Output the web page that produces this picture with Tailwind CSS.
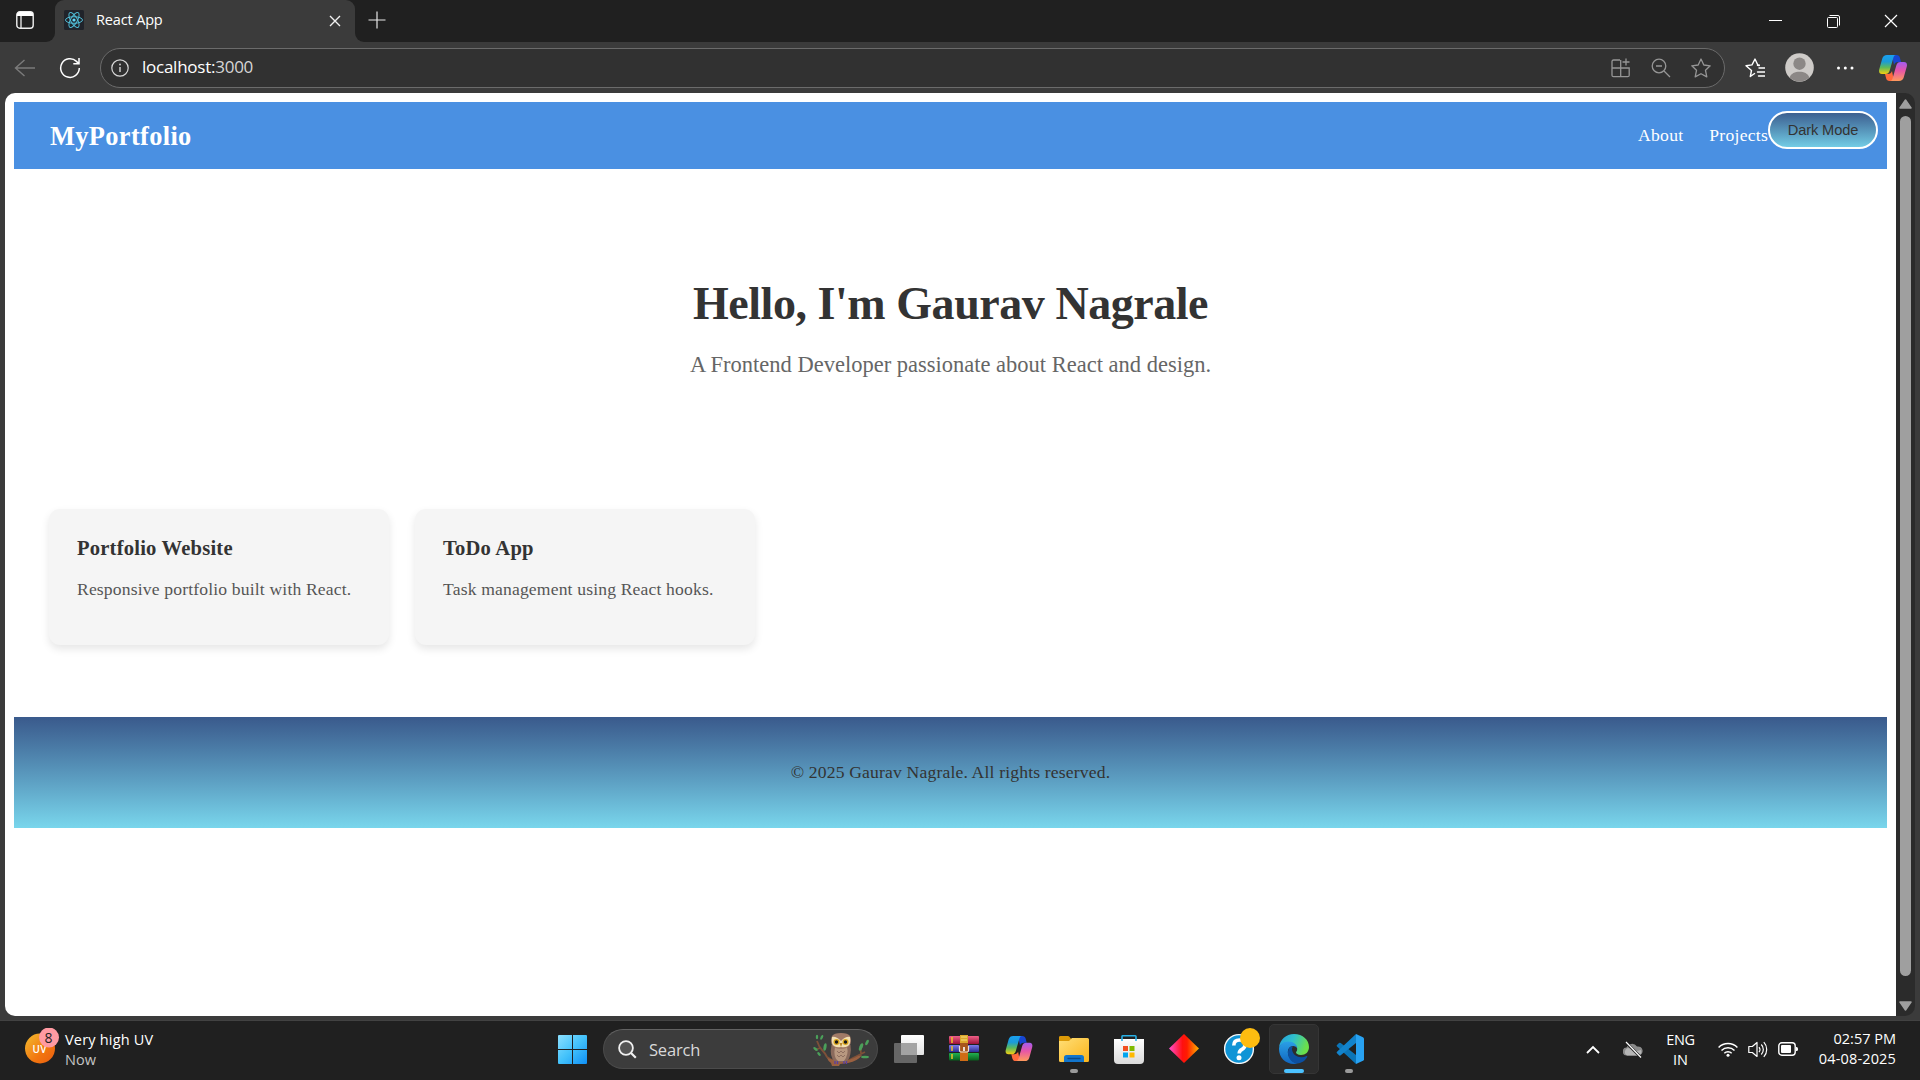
<!DOCTYPE html>
<html lang="en">
<head>
<meta charset="utf-8">
<title>React App</title>
<script src="https://cdn.jsdelivr.net/npm/@tailwindcss/browser@4"></script>
</head>
<body class="w-[1920px] h-[1080px] overflow-hidden bg-[#3b3b3b] flex flex-col font-['Open_Sans',sans-serif] text-white">
<svg class="absolute w-0 h-0" aria-hidden="true">
  <defs>
    <linearGradient id="cpA" x1="0" y1="0" x2="0" y2="1"><stop offset="0" stop-color="#1aa0f0"/><stop offset=".35" stop-color="#1b9bd8"/><stop offset=".65" stop-color="#5cba5c"/><stop offset="1" stop-color="#f5cf10"/></linearGradient>
    <linearGradient id="cpB" x1="0" y1="0" x2="0" y2="1"><stop offset="0" stop-color="#a35cf0"/><stop offset=".45" stop-color="#e655a8"/><stop offset="1" stop-color="#ff9a5c"/></linearGradient>
    <symbol id="copilot" viewBox="0 0 28 26">
      <path d="M13 0h4.500c1.900 0 2.900 1 3.400 2.700L22 7h-3c-2.200 0-3.300 1-4 3z" fill="#1746d2"/>
      <path d="M15 26h-4.500c-1.900 0-2.900-1-3.400-2.700L6 19h3c2.200 0 3.300-1 4-3z" fill="#ff6a3c"/>
      <path d="M8 0h9c-1.500 0-2.200 1.300-2.700 3l-3.600 12.500C10 18 8.600 19 6.500 19H3C.6 19-.4 17.200.2 14.500L3.300 3.500C4 1.200 5.500 0 8 0z" fill="url(#cpA)"/>
      <path d="M20 26h-9c1.500 0 2.200-1.300 2.700-3l3.600-12.500C18 8 19.400 7 21.500 7H25c2.400 0 3.400 1.800 2.800 4.500l-3.100 11C24 24.800 22.500 26 20 26z" fill="url(#cpB)"/>
    </symbol>
  </defs>
</svg>

<!-- Tab strip -->
<header class="h-[42px] shrink-0 flex">
  <div class="w-[55px] h-[42px] bg-[#202020] rounded-br-[9px] flex items-center pl-4">
    <svg class="w-[18px] h-[18px] -mt-[2px]" viewBox="0 0 18 18"><rect x=".8" y=".8" width="16.400" height="16.400" rx="3" fill="none" stroke="#f0f0f0" stroke-width="1.400"/><path d="M1 5V3.500A2.500 2.500 0 0 1 3.500 1h11A2.500 2.500 0 0 1 17 3.500V5z" fill="#fff"/><path d="M5 5v12" stroke="#f0f0f0" stroke-width="1.300"/></svg>
  </div>
  <div class="w-[300px] bg-linear-to-b from-[#202020] from-50% to-[#3b3b3b] to-50%">
    <div class="h-full bg-[#3b3b3b] rounded-t-[9px] flex items-center pl-[9px] pr-[14px]">
      <svg class="w-5 h-5 -mt-[2px]" viewBox="0 0 20 20"><rect width="20" height="20" rx="1.500" fill="#20232a"/><g fill="none" stroke="#50bcd6" stroke-width="1"><ellipse cx="10" cy="10" rx="8.500" ry="3.300"/><ellipse cx="10" cy="10" rx="8.500" ry="3.300" transform="rotate(60 10 10)"/><ellipse cx="10" cy="10" rx="8.500" ry="3.300" transform="rotate(120 10 10)"/></g><circle cx="10" cy="10" r="1.600" fill="#61dafb"/></svg>
      <span class="ml-3 text-[14.5px] leading-5 -mt-[3px] tracking-[-0.15px]">React App</span>
      <svg class="ml-auto w-3 h-3 -mt-[1px]" viewBox="0 0 12 12"><path d="M1 1l10 10M11 1L1 11" stroke="#f2f2f2" stroke-width="1.400"/></svg>
    </div>
  </div>
  <div class="flex-1 bg-[#202020] rounded-bl-[9px] flex items-center pl-[13px] pr-[22px]">
    <svg class="w-[18px] h-[18px] -mt-[3px]" viewBox="0 0 18 18"><path d="M9 .5v17M.5 9h17" stroke="#e8e8e8" stroke-width="1.200"/></svg>
    <svg class="ml-auto w-[130px] h-[14px]" viewBox="0 0 130 14"><path d="M1 6.500h13" stroke="#fff" stroke-width="1"/><rect x="59.500" y="3.500" width="10" height="10" rx="1" fill="none" stroke="#fff"/><path d="M61.500 1.500h8.500a1.500 1.500 0 0 1 1.500 1.500v8.500" fill="none" stroke="#fff"/><path d="M117 1l12 12M129 1l-12 12" stroke="#fff" stroke-width="1.200"/></svg>
  </div>
</header>

<!-- Toolbar -->
<div class="h-[51px] shrink-0 flex items-center pl-[14px] pr-[13px]">
  <svg class="w-[21px] h-[18px]" viewBox="0 0 21 18"><path d="M10.500 1L1.500 9l9 8M1.500 9H21" fill="none" stroke="#7b7b7b" stroke-width="1.400"/></svg>
  <svg class="ml-[24px] w-[22px] h-[22px]" viewBox="0 0 22 22"><path d="M20.300 11A9.300 9.300 0 1 1 17.500 4.400L19.500 6.500M20 1v5.700h-5.700" fill="none" stroke="#fff" stroke-width="1.500"/></svg>
  <div class="ml-[19px] w-[1625px] h-10 rounded-full border border-[#6b6b6b] bg-[#313131] flex items-center pl-[10px] pr-[13px]">
    <svg class="w-[18px] h-[18px]" viewBox="0 0 18 18"><circle cx="9" cy="9" r="8.200" fill="none" stroke="#d8d8d8" stroke-width="1.200"/><path d="M9 8v5" stroke="#d8d8d8" stroke-width="1.400"/><circle cx="9" cy="5.500" r=".9" fill="#d8d8d8"/></svg>
    <span class="ml-[13px] text-[17px] leading-6 -mt-[1px] tracking-[-0.25px]">localhost:<span class="text-[#d6d6d6]">3000</span></span>
    <svg class="ml-auto w-[100px] h-5" viewBox="0 0 100 20" fill="none" stroke="#969696" stroke-width="1.300"><path d="M9 2H2.500A1.500 1.500 0 0 0 1 3.500V17.200a1.500 1.500 0 0 0 1.500 1.500h14.200a1.500 1.500 0 0 0 1.500-1.500V10H1M9.700 2v16.500M15 .500v7M11.500 4h7"/><circle cx="48" cy="8" r="6.800"/><path d="M45 8h6M53 13l6 6"/><path d="M90 1l2.800 6 6.400.8-4.700 4.500 1.300 6.600L90 15.700l-5.800 3.200 1.300-6.600L80.800 7.800l6.400-.8z" stroke-linejoin="round"/></svg>
  </div>
  <svg class="ml-[20px] w-5 h-5" viewBox="0 0 20 20" fill="none" stroke="#fff" stroke-width="1.400"><path d="M10 15.200l-4.700 3.300 1.200-6L1 7.800l6-.9L10 1l2.800 6 2 .3" stroke-linejoin="round"/><path d="M14 10h6M12.500 14H20M13.500 18H20M12.500 7.200l1.700.3" stroke-linecap="round"/></svg>
  <svg class="ml-[20px] w-[29px] h-[29px]" viewBox="0 0 29 29"><circle cx="14.500" cy="14.500" r="14.300" fill="#cecbc8"/><circle cx="14.500" cy="10.700" r="6.200" fill="#8c8886"/><path d="M4.700 24.500C6 20.500 10 18.800 14.500 18.800s8.500 1.700 9.800 5.700a14 14 0 0 1-19.600 0z" fill="#8c8886"/></svg>
  <svg class="ml-[22px] w-[19px] h-1" viewBox="0 0 19 4" fill="#fff"><circle cx="2.500" cy="2" r="1.500"/><circle cx="9.300" cy="2" r="1.500"/><circle cx="16" cy="2" r="1.500"/></svg>
  <svg class="ml-auto w-7 h-[26px]"><use href="#copilot"/></svg>
</div>

<!-- Viewport -->
<div class="h-[923px] shrink-0 pl-[5px] pr-[5px] flex">
  <main class="w-[1891px] bg-white rounded-l-[10px] px-[9px] pt-[9px] flex flex-col font-['Liberation_Serif',serif] text-[#333]">
    <nav class="h-[67px] shrink-0 bg-[#4a90e2] text-white flex justify-between pl-[36px] pr-[9px]">
      <div class="self-center text-[26.4px] leading-[30px] font-bold tracking-[0.35px]">MyPortfolio</div>
      <div class="flex text-[17.6px] tracking-[0.25px]">
        <a class="self-center mr-[26px]">About</a>
        <a class="self-center">Projects</a>
        <button class="mt-[9px] w-[110px] h-[38px] rounded-full border-2 border-white bg-linear-to-b from-[#3a5a8c] to-[#76d3ea] bg-origin-border text-[#333] font-['Liberation_Sans',sans-serif] text-[14.67px] tracking-[-0.15px] pb-[1px]">Dark Mode</button>
      </div>
    </nav>
    <section class="pt-[109px] flex flex-col items-center">
      <h1 class="text-[46px] leading-[52px] font-bold tracking-[-0.45px]">Hello, I'm Gaurav Nagrale</h1>
      <p class="mt-[22px] text-[22.5px] leading-[26px] text-[#666]">A Frontend Developer passionate about React and design.</p>
    </section>
    <section class="mt-[131px] pl-[35px] flex gap-[26.4px]">
      <article class="w-[340px] h-[136px] rounded-[11px] bg-[#f5f5f5] shadow-[0_4px_9px_rgba(0,0,0,0.1)] pt-[27px] pl-7">
        <h3 class="text-[20.6px] leading-6 font-bold tracking-[0.2px]">Portfolio Website</h3>
        <p class="mt-[19px] text-[17.6px] leading-5 text-[#555] tracking-[0.16px]">Responsive portfolio built with React.</p>
      </article>
      <article class="w-[340px] h-[136px] rounded-[11px] bg-[#f5f5f5] shadow-[0_4px_9px_rgba(0,0,0,0.1)] pt-[27px] pl-[27.600px]">
        <h3 class="text-[20.6px] leading-6 font-bold tracking-[0.2px]">ToDo App</h3>
        <p class="mt-[19px] text-[17.6px] leading-5 text-[#555] tracking-[0.16px]">Task management using React hooks.</p>
      </article>
    </section>
    <footer class="mt-[72px] h-[111px] bg-linear-to-b from-[#3a5a8c] to-[#79d6ec] text-center pt-[45px] text-[17.6px] leading-5 tracking-[0.17px]">© 2025 Gaurav Nagrale. All rights reserved.</footer>
  </main>
  <div class="w-[19px] bg-[#2b2b2b] rounded-r-[10px] flex flex-col items-center pt-[6px] pb-[5px]">
    <svg class="w-[13px] h-[10px]" viewBox="0 0 13 10"><path d="M6.500 1L12 9H1z" fill="#9f9f9f" stroke="#9f9f9f" stroke-width="1.500" stroke-linejoin="round"/></svg>
    <div class="mt-[7px] w-[11px] h-[860px] rounded-full bg-[#9f9f9f]"></div>
    <svg class="mt-auto w-[13px] h-[10px]" viewBox="0 0 13 10"><path d="M6.500 9L12 1H1z" fill="#9f9f9f" stroke="#9f9f9f" stroke-width="1.500" stroke-linejoin="round"/></svg>
  </div>
</div>
<div class="h-[4px] shrink-0"></div>

<!-- Taskbar -->
<footer class="h-[60px] shrink-0 bg-[#202020] border-t border-[#424242] flex">
  <div class="w-[555px] flex pl-[25px] pt-[7px]">
    <svg class="w-[35px] h-[38px]" viewBox="0 0 35 38"><defs><linearGradient id="uv" x1="0" y1="0" x2="1" y2="1"><stop offset="0" stop-color="#f2bd30"/><stop offset=".6" stop-color="#f2760f"/><stop offset="1" stop-color="#ea5c10"/></linearGradient></defs><circle cx="15" cy="20.500" r="15" fill="url(#uv)"/><text x="7.500" y="25" font-size="10" font-weight="600" fill="#fff" font-family="Open Sans" textLength="14">UV</text><circle cx="24" cy="9.500" r="10" fill="#ff9aa2"/><text x="23.500" y="14.500" font-size="14" text-anchor="middle" fill="#222" font-family="Open Sans">8</text></svg>
    <div class="ml-[5px] mt-[2px] text-[14.5px] leading-5"><div class="tracking-[0.2px]">Very high UV</div><div class="text-[#c4c4c4]">Now</div></div>
  </div>
  <div class="flex">
    <svg class="ml-[3px] mt-[14px] w-[29px] h-[29px]" viewBox="0 0 29 29"><defs><linearGradient id="win" x1="0" y1="0" x2="1" y2="1"><stop offset="0" stop-color="#8ce0ff"/><stop offset=".5" stop-color="#43c2fb"/><stop offset="1" stop-color="#0f8ff5"/></linearGradient></defs><path d="M1 0h13v14H0V1a1 1 0 0 1 1-1zM15 0h13a1 1 0 0 1 1 1v13H15zM0 15h14v14H1a1 1 0 0 1-1-1zM15 15h14v13a1 1 0 0 1-1 1H15z" fill="url(#win)"/></svg>
    <div class="ml-4 mt-[8px] w-[275px] h-10 rounded-full bg-[#3c3c3c] border border-[#4b4b4b] border-t-[#626262] flex items-center pl-[14px] pr-[8px]">
      <svg class="w-[19px] h-[19px]" viewBox="0 0 19 19"><circle cx="8" cy="8" r="6.900" fill="#545454" stroke="#f0f0f0" stroke-width="1.800"/><path d="M13 13l4.800 4.800" stroke="#f0f0f0" stroke-width="2.200"/></svg>
      <span class="ml-[12px] mt-[2px] text-[16.5px] leading-6 text-[#d9d9d9] tracking-[-0.2px]">Search</span>
      <svg class="ml-auto mt-[2px] w-[56px] h-[34px]" viewBox="0 0 56 34">
        <path d="M4 8q2 6 5 9t5 7q5 4 10 5 10 0 16-4l12-6M50 11q-3 4-2 9M7 15L2 17" fill="none" stroke="#7d5038" stroke-width="1.800"/>
        <path d="M14 25q8 3 15 3t16-5l4-1q-4 6-14 8l-8 1-1 2h-7l-1-3q-3-2-4-5z" fill="#9a6040"/>
        <g fill="#4ba05a"><ellipse cx="4" cy="4" rx="1.200" ry="2.300"/><ellipse cx="8.500" cy="4.500" rx="1.200" ry="2.600" transform="rotate(25 9 5)"/><ellipse cx="2.500" cy="16" rx="1.200" ry="2.600" transform="rotate(-50 2.500 16)"/><ellipse cx="12" cy="14" rx="1.500" ry="3.800" transform="rotate(10 12 14)"/><ellipse cx="48" cy="14" rx="1.700" ry="4" transform="rotate(20 48 14)"/><ellipse cx="54" cy="9.500" rx="1.400" ry="3" transform="rotate(25 54 9.500)"/><ellipse cx="52" cy="24" rx="4" ry="1.300"/><ellipse cx="6" cy="21" rx="1.200" ry="2.300" transform="rotate(-40 6 21)"/></g>
        <path d="M18.500 12Q16 24 22 29h12q5-7 3.500-17z" fill="#8a6a5c"/><path d="M22 14q-2 10 3 14h6q5-7 3-14z" fill="#b89880"/><path d="M24 18l2 2 2-2 2 2 2-2M24 22l2 2 2-2 2 2 2-2" fill="none" stroke="#8a6a5c" stroke-width=".9"/>
        <path d="M19 3q2-3 9-3t9 3q2 5 0 9-3 4-9 4t-9-4q-2-4 0-9z" fill="#a07a66"/>
        <path d="M19 4q4-1 9 4 5-5 9-4 1 7-2 9-3 2-7 1-4 1-7-1-3-2-2-9z" fill="#f2dfb0"/>
        <circle cx="23.500" cy="9" r="3" fill="#d9a51d"/><circle cx="32.500" cy="9" r="3" fill="#d9a51d"/><circle cx="23.500" cy="9" r="1.700" fill="#16161a"/><circle cx="32.500" cy="9" r="1.700" fill="#16161a"/><path d="M26.500 10h3L28 14z" fill="#b8862c"/>
        <path d="M22 28v3M24.500 28v3M31 28v3M33.500 28v3" stroke="#5b3fa0" stroke-width="1.300"/>
      </svg>
    </div>
    <svg class="ml-4 mt-[14px] w-[30px] h-7" viewBox="0 0 30 28"><defs><linearGradient id="tv" x1="0" y1="0" x2="0" y2="1"><stop offset="0" stop-color="#fff"/><stop offset="1" stop-color="#e2e2e2"/></linearGradient></defs><rect x="0" y="8" width="23" height="20" rx="1" fill="#666"/><rect x="7" y="0" width="23" height="20" rx="1" fill="url(#tv)"/><path d="M7 8h16v12H7z" fill="#a3a3a3"/></svg>
    <!-- WinRAR -->
    <svg class="ml-[25px] mt-[14px] w-[30px] h-[26px]" viewBox="0 0 30 26"><defs><linearGradient id="r1" x1="0" y1="0" x2="0" y2="1"><stop offset="0" stop-color="#f06088"/><stop offset="1" stop-color="#9c1238"/></linearGradient><linearGradient id="r2" x1="0" y1="0" x2="0" y2="1"><stop offset="0" stop-color="#7c7ce8"/><stop offset="1" stop-color="#2c2c94"/></linearGradient><linearGradient id="r3" x1="0" y1="0" x2="0" y2="1"><stop offset="0" stop-color="#22b050"/><stop offset="1" stop-color="#08601c"/></linearGradient></defs><rect y="1" width="30" height="8" rx="1" fill="url(#r1)"/><rect y="10" width="30" height="7" rx="1" fill="url(#r2)"/><rect y="18" width="30" height="7.500" rx="1" fill="url(#r3)"/><path d="M3 2v6M3 11v5M3 19v5" stroke="#f0c22a" stroke-width="1.500"/><path d="M11 0h8v8h-8z" fill="#dca72c"/><path d="M12 2h6M12 5h6" stroke="#f9e07c"/><path d="M11 8h8v9h-8z" fill="#a8561d"/><path d="M11 17h8v9h-8z" fill="#cf6c16"/><path d="M10.500 11v4.500a1.500 1.500 0 0 0 1.500 1.500h6a1.500 1.500 0 0 0 1.500-1.500V11" fill="none" stroke="#ece4d6" stroke-width="1.200"/><path d="M15 12v4" stroke="#fff" stroke-width="1.600"/></svg>
    <svg class="ml-[26px] mt-[15px] w-7 h-[25px]"><use href="#copilot"/></svg>
    <!-- Explorer -->
    <svg class="ml-[26px] mt-[14px] w-[30px] h-[38px]" viewBox="0 0 30 38"><defs><linearGradient id="fo" x1="0" y1="0" x2="1" y2="1"><stop offset="0" stop-color="#ffdf78"/><stop offset="1" stop-color="#fbb41a"/></linearGradient></defs><path d="M0 3a1.500 1.500 0 0 1 1.500-2H9c2 0 2 3 4 3v6H0z" fill="#dc9a08"/><path d="M0 6h10l3-3h15.500A1.500 1.500 0 0 1 30 4.500v21a1.500 1.500 0 0 1-1.500 1.500h-27A1.500 1.500 0 0 1 0 25.500z" fill="url(#fo)"/><path d="M5 27v-4.500A2.500 2.500 0 0 1 7.500 20h15a2.500 2.500 0 0 1 2.500 2.500V27z" fill="#1275cc"/><path d="M9 23.500h12" stroke="#0a4a8a" stroke-width="1.300" stroke-linecap="round"/><rect x="11" y="34" width="8" height="4" rx="2" fill="#9a9a9a"/></svg>
    <!-- Store -->
    <svg class="ml-[25px] mt-[14px] w-[30px] h-[29px]" viewBox="0 0 30 29"><defs><linearGradient id="st" x1="0" y1="0" x2="0" y2="1"><stop offset="0" stop-color="#fff"/><stop offset="1" stop-color="#dadada"/></linearGradient></defs><path d="M0 4h30v21a4 4 0 0 1-4 4H4a4 4 0 0 1-4-4z" fill="url(#st)"/><path d="M8 6V1.500A.8.8 0 0 1 8.800.8h12.400a.8.8 0 0 1 .8.800V6" fill="none" stroke="#29b1e6" stroke-width="1.600"/><path d="M9 11h5v5H9z" fill="#f25022"/><path d="M15.500 11h5v5h-5z" fill="#7fba00"/><path d="M9 17.500h5v5H9z" fill="#00a4ef"/><path d="M15.500 17.500h5v5h-5z" fill="#ffb900"/></svg>
    <svg class="ml-[25px] mt-[13px] w-[30px] h-[29px]" viewBox="0 0 30 29"><defs><linearGradient id="di" x1="0" y1="0" x2="1" y2="0"><stop offset="0" stop-color="#ff4fd0"/><stop offset=".45" stop-color="#ff1010"/><stop offset=".6" stop-color="#ff1c00"/><stop offset="1" stop-color="#ffb400"/></linearGradient></defs><path d="M15 0l15 14.500L15 29 0 14.500z" fill="url(#di)"/></svg>
    <!-- Help -->
    <svg class="ml-[25px] mt-[7px] w-[36px] h-[36px]" viewBox="0 0 36 36"><circle cx="15" cy="21" r="14.400" fill="#0f94d6" stroke="#f6f6f6" stroke-width="1.400"/><path d="M9.800 17.500q0-5.500 5.700-5.500t5.500 4.800q0 3-3 4.600-2.800 1.500-2.800 4" fill="none" stroke="#fff" stroke-width="3.600"/><circle cx="15" cy="29.700" r="2.500" fill="#fff"/><circle cx="26" cy="10" r="10" fill="#fdbc10"/></svg>
    <!-- Edge -->
    <div class="ml-[9px] mt-[3px] w-[50px] h-[50px] rounded-[5px] bg-[#2c2c2c] border border-[#353535] flex flex-col items-center pt-[9px]">
      <svg class="w-[30px] h-[30px] shrink-0" viewBox="0 0 30 30"><defs><linearGradient id="e1" x1="0" y1="0" x2="1" y2=".3"><stop offset="0" stop-color="#259fe0"/><stop offset=".5" stop-color="#2fc0cc"/><stop offset="1" stop-color="#6be04a"/></linearGradient><linearGradient id="e2" x1="0" y1="0" x2="0" y2="1"><stop offset="0" stop-color="#2a9fe6"/><stop offset="1" stop-color="#1166c0"/></linearGradient></defs>
      <path d="M0 13.500C1 5.500 7 0 15 0c9 0 15 6 15 13 0 5-3.500 8-8 8-3.500 0-5-1.300-5-2.400 0-.8 1.200-1.300 1.200-3.600C18.200 11 14 8.500 9.500 8.500 5 8.500 1.500 10.500 0 13.500z" fill="url(#e1)"/><path d="M0 15C0 11 4 7.500 9.500 7.500c5 0 8.500 3 8.700 6.500-1-1.300-2.600-2-4-2-4 0-6.200 4-5 8.500C10.500 25 14 28.500 18.500 29.600 17.500 30 16.200 30 15 30 6.500 30 0 23.500 0 15z" fill="url(#e2)"/><path d="M11 13c-3 3.500-3 10.500 2 14.500 4 3.200 9 2 12.500-1 1.300-1.200 2.300-2.800 2.800-3.800.3-.6-.3-1-.8-.7-6 3-13.500.5-14.500-6.500-.1-1 .2-2 .8-2.800C12.700 12.300 11.700 12.300 11 13z" fill="#0c4fa0"/></svg>
      <div class="mt-[5px] w-5 h-1 rounded-full bg-[#4cc2ff] shrink-0"></div>
    </div>
    <!-- VS Code -->
    <svg class="ml-[15px] mt-[13px] w-[30px] h-[39px]" viewBox="0 0 30 39"><path d="M22 0v30l-19-17.500a1 1 0 0 1 0-1.500l2-2a1.300 1.300 0 0 1 1.700 0L22 21z" fill="#0b75b8"/><path d="M22 9L6.700 21.300a1.300 1.300 0 0 1-1.700 0l-2-2a1 1 0 0 1 0-1.500L22 0z" fill="#1283cc"/><path d="M22 0l7 3.200q1 .5 1 1.600v20.400q0 1.100-1 1.600L22 30z" fill="#28a2f2"/><rect x="11" y="35" width="8" height="4" rx="2" fill="#9a9a9a"/></svg>
  </div>
  <div class="ml-auto flex pr-[24px]">
    <svg class="mt-[24px] w-[14px] h-[9px]" viewBox="0 0 14 9"><path d="M1 8l6-6 6 6" fill="none" stroke="#fff" stroke-width="1.800"/></svg>
    <svg class="ml-[23px] mt-[20px] w-[20px] h-[18px]" viewBox="0 0 20 18"><path d="M4 14.500a4 4 0 0 1-.5-8A6 6 0 0 1 14 5.500a4.600 4.600 0 0 1 2 9z" fill="#8b8b8b"/><path d="M4 14.500a4 4 0 0 1 1-7.500l4 1 5 2 4-1a4.500 4.500 0 0 1-2 5.500z" fill="#b5b5b5"/><path d="M3.500 2L18 16.500" stroke="#202020" stroke-width="2.600"/><path d="M3 1l15 15.500" stroke="#fff" stroke-width="1.200"/></svg>
    <div class="ml-[23px] mt-[9px] w-[29px] text-[14.5px] leading-5 flex flex-col items-center whitespace-nowrap"><span class="tracking-[-0.3px]">ENG</span><span>IN</span></div>
    <svg class="ml-[23px] mt-[20px] w-[20px] h-[17px]" viewBox="0 0 20 17" fill="none" stroke="#fff" stroke-width="1.500"><path d="M.6 6.500a13.300 13.300 0 0 1 18.800 0M3.500 9.500a9.200 9.200 0 0 1 13 0M6.300 12.200a5.200 5.200 0 0 1 7.400 0"/><circle cx="10" cy="14.300" r="1.500" fill="#fff" stroke="none"/></svg>
    <svg class="ml-[10px] mt-[20px] w-[20px] h-[17px]" viewBox="0 0 20 17" fill="none" stroke="#fff" stroke-width="1.200"><path d="M.8 5.500h3.500L9 1.500v14l-4.700-4H.8z" stroke-linejoin="round"/><path d="M11 6a4 4 0 0 1 0 5M13.300 3.500a7.200 7.200 0 0 1 0 10M15.800 1.200a10.600 10.600 0 0 1 0 14.600"/></svg>
    <svg class="ml-[10px] mt-[21px] w-[20px] h-[14px]" viewBox="0 0 20 14"><rect x=".8" y=".8" width="16.400" height="12.400" rx="3" fill="none" stroke="#fff" stroke-width="1.400"/><rect x="3" y="3" width="10" height="8" rx="1" fill="#fff"/><path d="M18 5h.5a1.500 1.500 0 0 1 1.500 1.500v1A1.500 1.500 0 0 1 18.500 9H18z" fill="#fff"/></svg>
    <div class="w-[98px] mt-[8px] text-[14.5px] leading-5 text-right whitespace-nowrap"><div>02:57 PM</div><div class="tracking-[0.15px]">04-08-2025</div></div>
  </div>
</footer>
</body>
</html>
